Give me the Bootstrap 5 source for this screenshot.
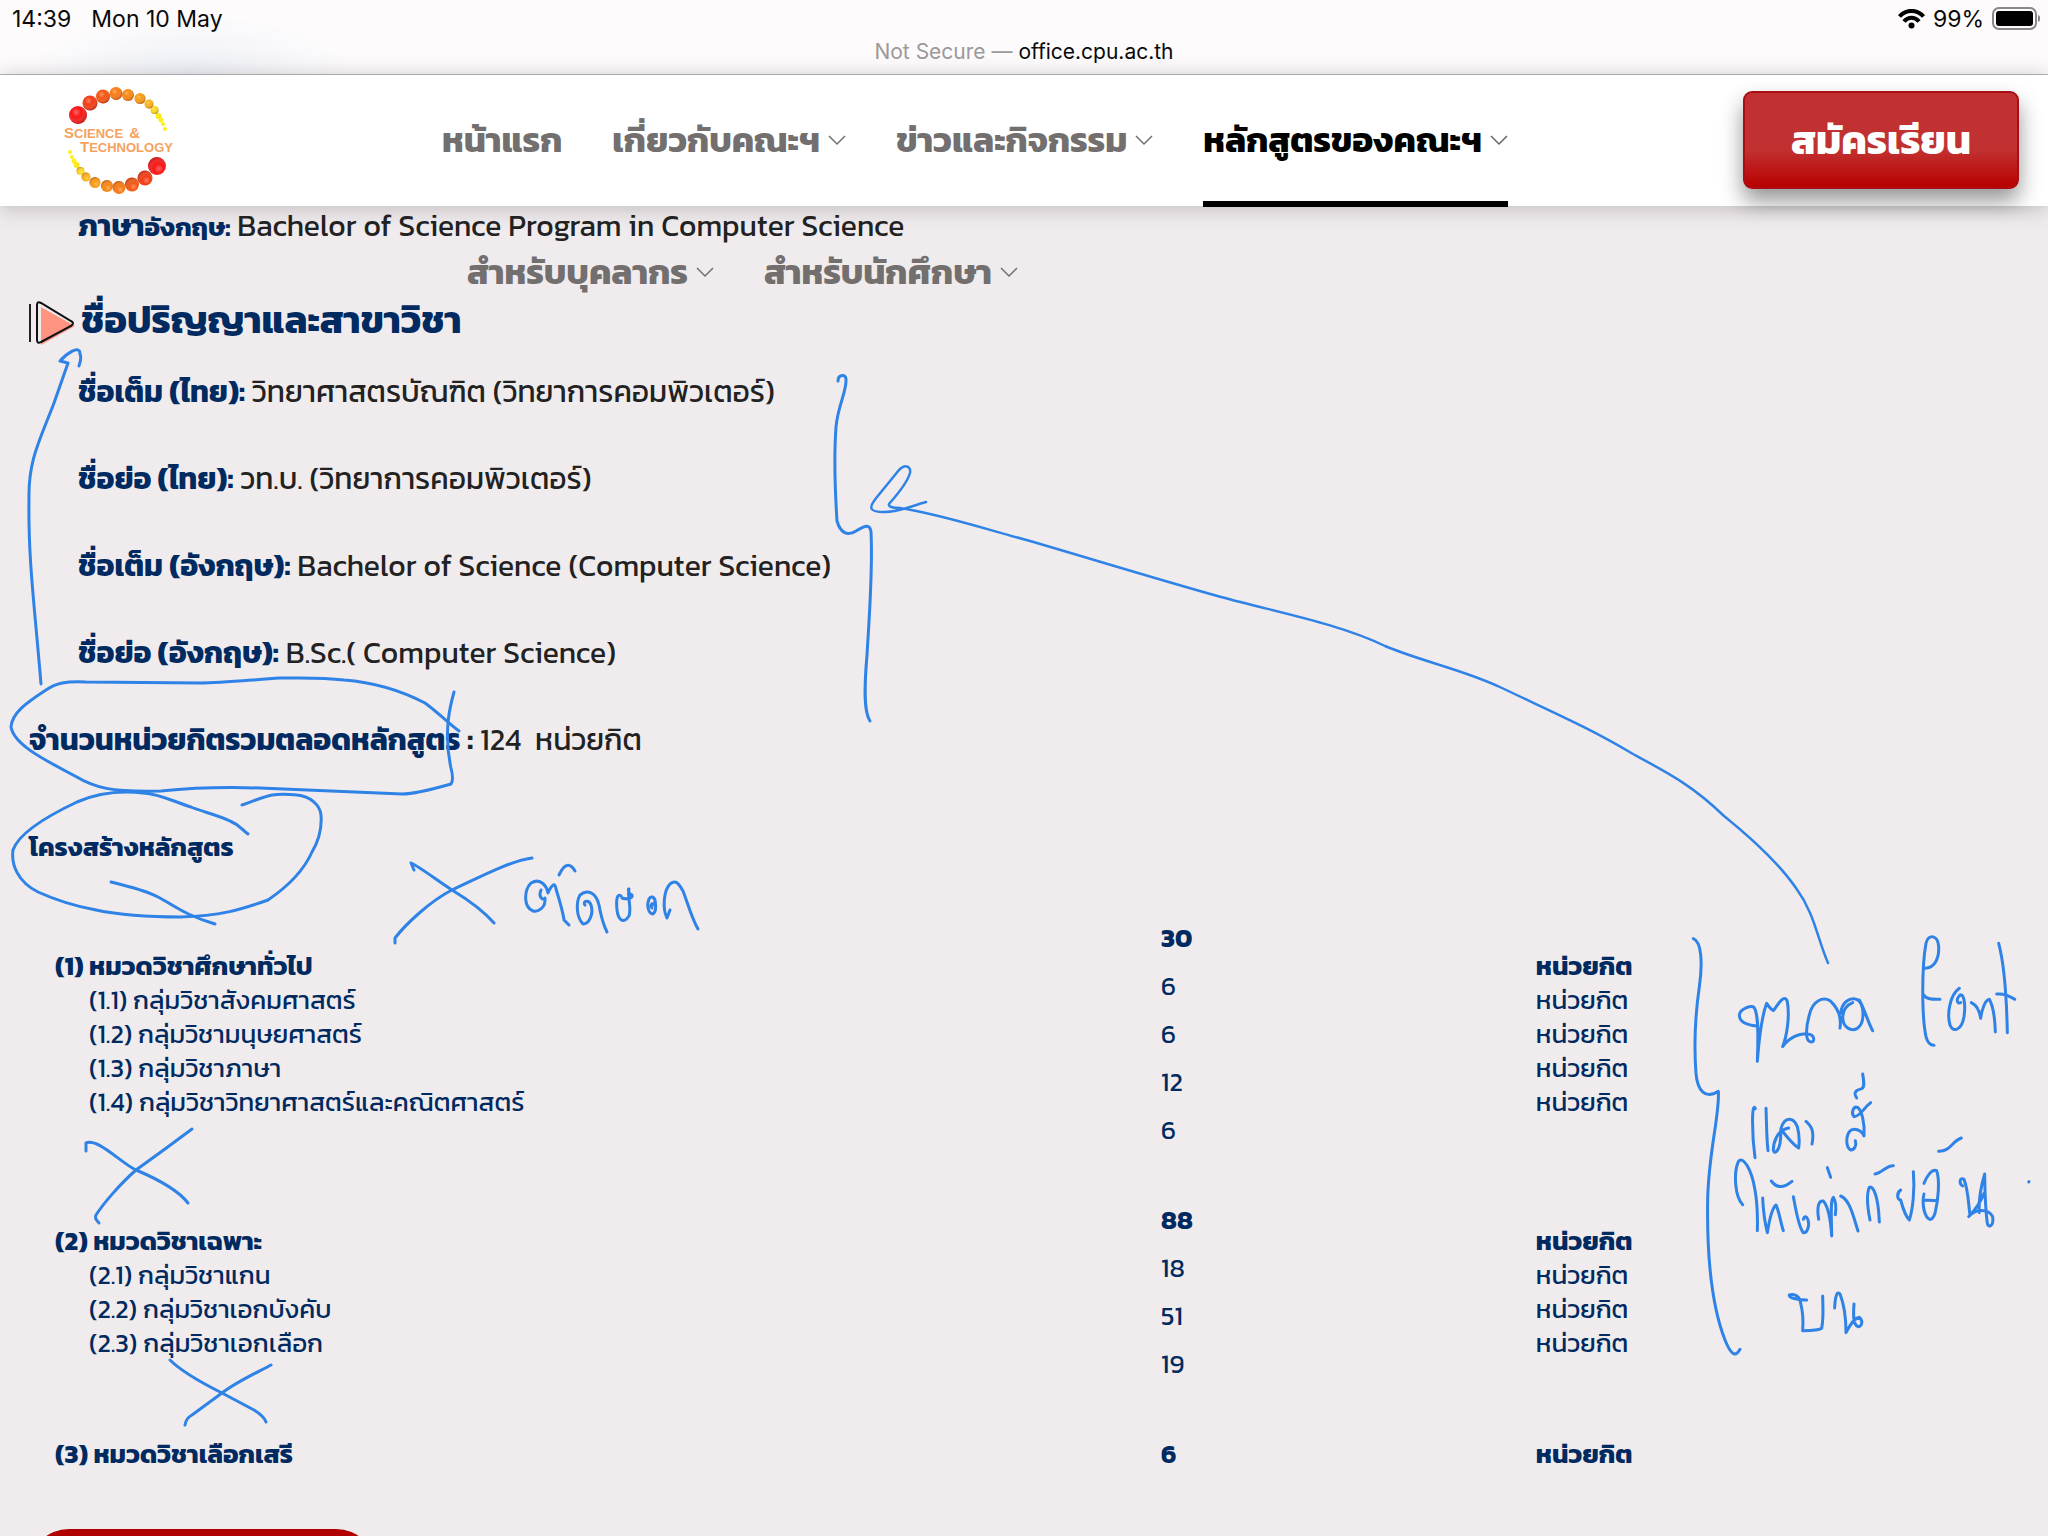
<!DOCTYPE html>
<html lang="th">
<head>
<meta charset="utf-8">
<meta name="viewport" content="width=device-width, initial-scale=1">
<title>office.cpu.ac.th</title>
<link href="https://cdn.jsdelivr.net/npm/bootstrap@5.3.0/dist/css/bootstrap.min.css" rel="stylesheet">
<style>
:root{--navy:#002a60;--ink:#2f82e6}
html,body{height:100%}
body{background:#f0ecee;color:#222;font-family:Kanit,"Noto Sans Thai","Noto Sans",sans-serif;font-size:30px;line-height:40px;overflow:hidden}
.status-strip{height:75px;border-bottom:1px solid #b9b7b8;background:radial-gradient(ellipse 160px 60px at 190px 74px,#edf0f6,transparent),#fdfbfc;font-family:Inter,sans-serif;font-size:23px;line-height:28px;color:#0a0a0a;padding:5px 8px 0 12px}
.status-strip .muted-part{color:#9b999a}
.addr{font-size:21px;line-height:38px}
.site-bar{height:131px;background:#fff;box-shadow:0 2px 20px rgba(60,50,55,.28);padding:0 29px 0 64px;z-index:5}
.brand-logo{width:108px;height:108px}
.menu{width:1100px;margin-left:270px;line-height:130px;font-size:35px;font-weight:700}
.menu li{margin:0 25px}
.menu li:first-child{margin-left:0}
.menu a{color:#736f6f;gap:8px;height:132px;padding-bottom:2px}
.menu a.current{color:#000;box-shadow:inset 0 -6px #000}
.chev{width:18px;height:11px;flex:none}
.current .chev{color:#666}
.apply{width:276px;height:98px;border:2px solid #a90e14;border-radius:9px;color:#fff;font-size:40px;font-weight:700;background:linear-gradient(#c23131 60%,#b90000);box-shadow:0 12px 22px rgba(0,0,0,.42)}
.apply:hover{color:#fff}
.content b,.navy{color:var(--navy)}
.content p{margin:0 0 47px}
.inset{padding-left:78px}
.flush{padding-left:29px}
.fine{font-size:26px}
.sec-title{margin:46px 0 25px;line-height:50px;font-size:38px;font-weight:700;gap:6px}
.play{width:46px;height:46px}
.content .outline-title{font-size:26px;padding-top:20px;margin-bottom:26px}
.credits{color:var(--navy);font-size:26px;line-height:34px;margin-left:55px}
.credits td,.credits th{padding:21px 0;vertical-align:middle;font-weight:400}
.sub{padding-left:34px}
.nums{line-height:48px}
.pill{width:347px;height:80px;border-radius:40px;background:#b00000;margin:30px 0 0 29px}
.ink-layer{left:0;top:0;width:2048px;height:1536px;pointer-events:none;z-index:10;fill:none;stroke:var(--ink);stroke-width:3;stroke-linecap:round;stroke-linejoin:round}
</style>
<script src="https://cdn.jsdelivr.net/npm/bootstrap@5.3.0/dist/js/bootstrap.bundle.min.js"></script>
</head>
<body class="position-relative">
<header>
  <div class="status-strip">
    <div class="d-flex align-items-center">
      <span class="me-3">14:39</span><span class="ms-1">Mon 10 May</span>
      <svg class="ms-auto me-2" width="27" height="20" viewBox="0 0 27 20" fill="none" stroke="#000" stroke-width="4"><path d="M1.500 7.500C8 0 19 0 25.500 7.500M6 12.500c4-5 11-5 15 0"/><circle cx="13.500" cy="16.500" r="3" fill="#000" stroke="none"/></svg>
      <span>99%</span>
      <svg class="ms-2" width="48" height="24" viewBox="0 0 48 24"><rect x="1" y="1" width="43" height="21" rx="6" fill="none" stroke="#8a8889" stroke-width="2"/><rect x="4" y="4" width="37" height="15" rx="3"/><path d="M46 8c3 1 3 6 0 7z" fill="#8a8889"/></svg>
    </div>
    <div class="addr text-center me-1"><span class="muted-part">Not Secure —</span> office.cpu.ac.th</div>
  </div>
  <nav class="site-bar d-flex position-relative" aria-label="เมนูหลัก">
    <a href="#" class="d-block mt-2 pt-1" aria-label="Science &amp; Technology">
      <svg class="brand-logo d-block overflow-visible" viewBox="64 86 108 108">
        <defs>
          <radialGradient id="sh" cx=".4" cy=".35" r=".7"><stop offset="0" stop-color="#fff" stop-opacity=".35"/><stop offset=".4" stop-color="#fff" stop-opacity="0"/><stop offset="1" stop-color="#600" stop-opacity=".45"/></radialGradient>
          <g id="balls"><circle cx="78" cy="114" r="9" fill="#f91414"/><circle cx="90" cy="102" r="7.500" fill="#f33a12"/><circle cx="103" cy="95.500" r="7" fill="#f4560f"/><circle cx="116" cy="92.500" r="6.500" fill="#f77a10"/><circle cx="128" cy="94" r="6" fill="#f8870f"/><circle cx="140" cy="97.500" r="5.500" fill="#f99b12"/><circle cx="149" cy="103" r="4.500" fill="#fbb416"/><circle cx="154.500" cy="109" r="4" fill="#fcd81a"/><circle cx="158.500" cy="115" r="3" fill="#fde91c"/><circle cx="161" cy="119" r="2.500" fill="#fdf01c"/><circle cx="163" cy="123" r="2" fill="#fdf01c"/><circle cx="165" cy="128" r="2" fill="#fdf01c"/>
          <g fill="url(#sh)"><circle cx="78" cy="114" r="9"/><circle cx="90" cy="102" r="7.500"/><circle cx="103" cy="95.500" r="7"/><circle cx="116" cy="92.500" r="6.500"/><circle cx="128" cy="94" r="6"/><circle cx="140" cy="97.500" r="5.500"/><circle cx="149" cy="103" r="4.500"/><circle cx="154.500" cy="109" r="4"/></g></g>
        </defs>
        <use href="#balls"/><use href="#balls" transform="rotate(180 117.500 139.500)"/>
        <g font-family="Liberation Sans,sans-serif" font-weight="700" fill="#f6a25e"><text x="64" y="137"><tspan font-size="15">S</tspan><tspan font-size="13">CIENCE</tspan><tspan font-size="15" dx="6">&amp;</tspan></text><text x="80" y="151"><tspan font-size="15">T</tspan><tspan font-size="13">ECHNOLOGY</tspan></text></g>
      </svg>
    </a>
    <ul class="menu list-unstyled d-flex flex-wrap mb-0 flex-shrink-0">
      <li><a class="d-flex align-items-center text-decoration-none" href="#">หน้าแรก</a></li>
      <li><a class="d-flex align-items-center text-decoration-none" href="#">เกี่ยวกับคณะฯ<svg class="chev" viewBox="0 0 18 11" fill="none" stroke="currentColor" stroke-width="1.500"><path d="M1 1l8 8 8-8"/></svg></a></li>
      <li><a class="d-flex align-items-center text-decoration-none" href="#">ข่าวและกิจกรรม<svg class="chev" viewBox="0 0 18 11" fill="none" stroke="currentColor" stroke-width="1.500"><path d="M1 1l8 8 8-8"/></svg></a></li>
      <li><a class="current d-flex align-items-center text-decoration-none" href="#" aria-current="page">หลักสูตรของคณะฯ<svg class="chev" viewBox="0 0 18 11" fill="none" stroke="currentColor" stroke-width="1.500"><path d="M1 1l8 8 8-8"/></svg></a></li>
      <li><a class="d-flex align-items-center text-decoration-none" href="#">สำหรับบุคลากร<svg class="chev" viewBox="0 0 18 11" fill="none" stroke="currentColor" stroke-width="1.500"><path d="M1 1l8 8 8-8"/></svg></a></li>
      <li><a class="d-flex align-items-center text-decoration-none" href="#">สำหรับนักศึกษา<svg class="chev" viewBox="0 0 18 11" fill="none" stroke="currentColor" stroke-width="1.500"><path d="M1 1l8 8 8-8"/></svg></a></li>
    </ul>
    <button type="button" class="apply btn ms-auto mt-3">สมัครเรียน</button>
  </nav>
</header>

<main class="content">
  <p class="inset mb-0"><b>ภาษา<span class="fine">อังกฤษ:</span></b> Bachelor of Science Program in Computer Science</p>
  <h2 class="sec-title flush navy d-flex align-items-center">
    <svg class="play mt-2" viewBox="0 0 46 46"><path d="M12 6v38l34-19z" fill="#ff9480"/><path d="M1 3v38" stroke="#222" stroke-width="2"/><path d="M8 4q0-4 4-2l30 18q4 2 0 5L12 41q-4 2-4-2z" fill="none" stroke="#111" stroke-width="2"/></svg>
    ชื่อปริญญาและสาขาวิชา
  </h2>
  <p class="inset"><b>ชื่อเต็ม (ไทย):</b> วิทยาศาสตรบัณฑิต (วิทยาการคอมพิวเตอร์)</p>
  <p class="inset"><b>ชื่อย่อ (ไทย):</b> วท.บ. (วิทยาการคอมพิวเตอร์)</p>
  <p class="inset"><b>ชื่อเต็ม (อังกฤษ):</b> Bachelor of Science (Computer Science)</p>
  <p class="inset"><b>ชื่อย่อ (อังกฤษ):</b> B.Sc.( Computer Science)</p>
  <p class="flush"><b>จำนวนหน่วยกิตรวมตลอดหลักสูตร</b> <strong>:</strong> 124 &nbsp;หน่วยกิต</p>
  <p class="flush navy outline-title"><b>โครงสร้างหลักสูตร</b></p>
  <div class="credits">
    <table class="w-100">
      <colgroup><col style="width:55.500%"><col style="width:18.800%"><col></colgroup>
      <tbody>
        <tr>
          <th scope="row"><b>(1) หมวดวิชาศึกษาทั่วไป</b><div class="sub">(1.1) กลุ่มวิชาสังคมศาสตร์<br>(1.2) กลุ่มวิชามนุษยศาสตร์<br>(1.3) กลุ่มวิชาภาษา<br>(1.4) กลุ่มวิชาวิทยาศาสตร์และคณิตศาสตร์</div></th>
          <td class="nums"><b>30</b><br>6<br>6<br>12<br>6</td>
          <td><b>หน่วยกิต</b><br>หน่วยกิต<br>หน่วยกิต<br>หน่วยกิต<br>หน่วยกิต</td>
        </tr>
        <tr>
          <th scope="row"><b>(2) หมวดวิชาเฉพาะ</b><div class="sub">(2.1) กลุ่มวิชาแกน<br>(2.2) กลุ่มวิชาเอกบังคับ<br>(2.3) กลุ่มวิชาเอกเลือก</div></th>
          <td class="nums"><b>88</b><br>18<br>51<br>19</td>
          <td><b>หน่วยกิต</b><br>หน่วยกิต<br>หน่วยกิต<br>หน่วยกิต</td>
        </tr>
        <tr>
          <th scope="row"><b>(3) หมวดวิชาเลือกเสรี</b></th>
          <td class="nums"><b>6</b></td>
          <td><b>หน่วยกิต</b></td>
        </tr>
      </tbody>
    </table>
  </div>
  <button type="button" class="pill d-block border-0" aria-label="ดูเพิ่มเติม"></button>
</main>

<svg class="ink-layer position-absolute" viewBox="0 0 2048 1536" aria-hidden="true">
  <path d="M41 684C35 610 28 560 29 500C28 460 40 440 54 403L68 363L60 361C66 354 80 344 80 354C82 358 80 362 79 366"/>
  <path d="M459 731C449 724 440 714 425 703C396 688 370 682 344 680C320 677 300 678 280 678C250 680 220 683 201 683L86 682C66 681 56 683 46 690C26 703 12 713 11 727C14 745 45 760 75 776C95 788 110 792 161 791C190 788 230 787 260 788L402 794C412 794 430 790 451 784Q454 780 451 768C447 750 447 735 448 723Q449 710 454 692"/>
  <path d="M248 834C242 830 240 825 230 821C218 815 200 811 191 807C172 801 160 794 143 793C125 791 100 792 77 802C60 810 20 830 13 850C11 865 18 882 38 892C60 902 85 908 96 910C120 915 150 917 180 917C220 916 240 910 268 900C290 885 304 870 312 852C318 842 322 828 321 815C320 805 310 796 297 795C270 792 265 797 242 805"/>
  <path d="M111 882C130 887 145 890 158 897C175 906 185 915 215 924"/>
  <path d="M532 858C510 861 480 877 452 890C430 901 405 925 395 938V943M414 870L411 863C420 867 435 879 452 890Q480 907 494 923"/>
  <path d="M541 890C538 897 543 901 545 898C546 908 538 912 533 911C523 907 524 890 531 883C541 877 547 887 548 893C551 886 555 881 556 889C560 902 563 912 564 920L569 925M559 875Q567 858 575 871"/>
  <path d="M585 905C582 901 589 899 591 905C594 914 589 924 583 924C576 917 576 902 580 895C587 889 596 892 599 905Q602 922 607 932"/>
  <path d="M622 898C628 900 633 898 632 895C628 894 628 888 629 889C627 897 632 908 629 916C623 925 618 919 617 910C616 900 617 893 621 896M652 908C650 905 652 902 654 905C657 899 652 894 649 899C646 906 649 914 653 914C657 911 656 905 655 900"/>
  <path d="M670 910L667 918C662 908 664 890 670 884C676 879 679 884 683 891C688 904 692 919 698 929"/>
  <path d="M192 1129Q164 1150 136 1170C120 1184 103 1204 96 1215Q94 1218 99 1223M86 1151V1143C98 1138 121 1163 136 1170C155 1178 178 1190 188 1203"/>
  <path d="M170 1360C182 1372 202 1383 222 1393L254 1410Q264 1416 266 1422M271 1365C256 1373 236 1382 222 1393L192 1415Q186 1418 185 1425"/>
  <path d="M838 381C838 374 846 374 846 379C847 391 838 405 836 427C834 455 835 490 837 521C840 532 847 537 856 531C864 526 870 523 871 532C873 570 869 620 867 655C864 690 864 712 870 721"/>
  <path stroke-width="2.500" d="M926 502C911 506 900 512 884 512C869 512 868 508 877 497L899 470C906 463 911 467 910 473C907 484 895 497 889 504Q888 508 900 508C940 514 985 529 1030 541C1095 560 1160 580 1221 597C1280 613 1340 624 1385 646C1420 661 1465 670 1502 688C1550 711 1590 728 1633 754C1670 774 1693 786 1724 816C1755 841 1780 865 1796 888C1815 914 1817 938 1828 963"/>
  <g transform="translate(1660 900) scale(.333333)" stroke-width="9">
    <path d="M100 116C125 125 128 190 118 260C105 350 102 440 108 520C112 570 135 600 175 574C180 640 145 760 143 900C140 1100 160 1230 195 1320C215 1370 228 1370 240 1348"/>
    <path d="M290 378C260 375 238 365 238 345C240 325 275 315 282 322C298 345 294 430 292 484C296 430 305 350 320 310C330 325 340 335 342 330C355 310 375 280 382 305C390 350 380 410 368 440C385 415 420 395 450 403C465 408 465 430 450 425C435 420 438 380 448 345C458 300 490 290 510 302C535 325 545 350 540 384M578 308C560 315 550 330 548 350C548 385 575 395 592 385C615 370 615 310 590 298C570 292 545 305 542 340M598 300C615 330 625 370 638 392"/>
    <path d="M790 204C820 208 838 180 836 140C834 105 805 100 798 130C785 200 785 350 798 410C803 430 812 436 822 436M790 284C800 300 820 298 840 298M898 265C870 285 860 340 870 375C880 400 905 390 912 350C918 310 910 270 896 290C888 300 892 312 902 308M934 308C955 318 960 340 962 355C965 330 975 300 988 298C1000 320 1005 360 1006 396M1016 130C1035 200 1040 300 1042 398M1010 282C1035 280 1050 288 1064 298"/>
    <path d="M286 626C275 600 275 700 285 773M318 625C320 680 320 720 324 752M386 684C350 690 340 730 340 750C342 765 355 755 360 730C365 700 360 690 364 682C375 650 400 650 412 680C420 710 418 730 416 744C400 735 385 715 366 692M438 664C458 680 462 700 456 732"/>
    <path d="M608 522C612 545 614 560 606 566C590 570 578 575 590 594M632 608C610 625 600 650 582 650C572 640 580 618 592 622C605 630 615 670 612 708C605 690 580 680 568 695C555 715 560 745 572 750C585 750 590 735 586 722"/>
    <path d="M248 914C225 890 220 820 235 785C250 765 275 810 285 870C292 910 293 960 292 992M308 894C310 940 315 970 322 998C328 960 335 925 348 915C358 935 362 970 370 992M334 843C350 865 370 865 396 844M400 890C408 930 415 980 430 998C440 1000 450 980 444 960C438 945 432 950 430 958"/>
    <path d="M476 958C470 920 476 900 490 903C505 920 512 960 515 1008C515 960 510 900 520 892C528 905 528 930 526 944M502 803L512 832M542 888C570 900 580 950 594 993M630 960C622 920 620 880 628 862C640 855 655 890 658 966M645 822C665 820 680 795 700 797"/>
    <path d="M722 870C708 880 712 900 722 900C730 930 738 950 748 960C758 930 765 870 760 815M792 850C800 830 815 805 830 812C840 840 835 900 825 940C815 970 800 960 792 930C788 910 790 890 792 882M792 900L832 902M836 754C870 755 875 725 904 714"/>
    <path d="M908 858C895 850 900 830 912 838C925 870 925 910 930 946C940 935 960 910 972 880M926 950C945 925 985 925 998 950C1002 980 985 985 982 970C975 920 975 880 974 822C965 850 955 900 958 938M1106 846L1107 845"/>
    <path d="M440 1200C420 1200 385 1195 388 1185C405 1180 420 1190 422 1210C430 1240 430 1265 428 1292C450 1292 475 1292 485 1285C492 1250 488 1210 488 1188M524 1224C525 1195 530 1170 540 1182C555 1220 558 1260 558 1298C575 1265 585 1255 598 1252C612 1265 604 1280 594 1280C578 1275 580 1240 582 1212"/>
  </g>
</svg>
</body>
</html>
